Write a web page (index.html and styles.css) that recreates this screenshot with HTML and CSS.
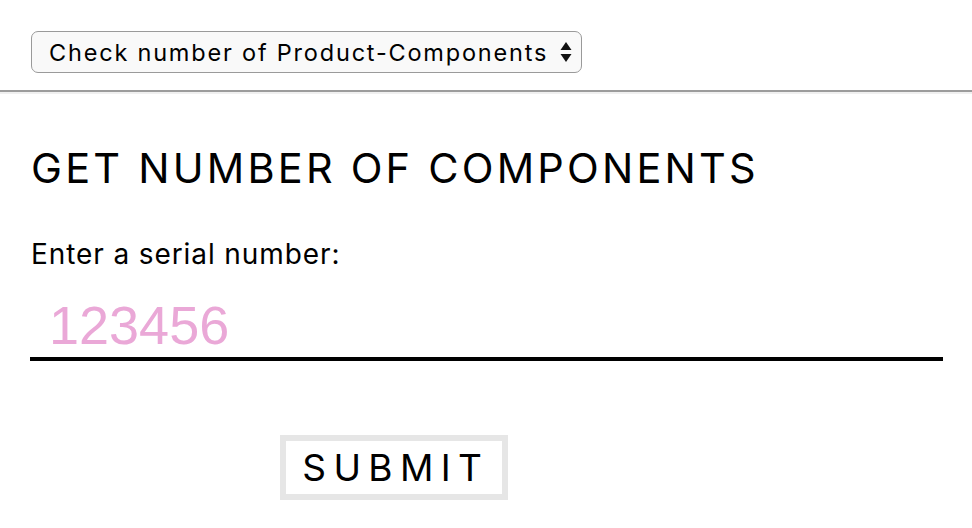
FILE: index.html
```html
<!DOCTYPE html>
<html lang="en">
<head>
<meta charset="utf-8">
<title>Get number of components</title>
<link rel="stylesheet" href="styles.css">
</head>
<body>
<header class="topbar">
  <div class="select-wrap">
    <select class="nav-select">
      <option>Check number of Product-Components</option>
    </select>
    <svg class="select-arrows" width="12" height="22" viewBox="0 0 12 22" aria-hidden="true">
      <path d="M6 1 L11.5 9 L0.5 9 Z" fill="#111"/>
      <path d="M6 21 L11.5 13 L0.5 13 Z" fill="#111"/>
    </svg>
  </div>
</header>
<main class="content">
  <h1 class="title">GET NUMBER OF COMPONENTS</h1>
  <form class="form">
    <label class="label" for="serial">Enter a serial number:</label>
    <input class="serial" id="serial" type="text" placeholder="123456">
    <div class="actions">
      <button class="submit" type="button">SUBMIT</button>
    </div>
  </form>
</main>
</body>
</html>
```
FILE: styles.css
```css
* { box-sizing: border-box; }
html, body { margin: 0; padding: 0; background: #fff; }
body {
  font-family: Inter, "Noto Sans", sans-serif;
  color: #000;
}
.topbar {
  padding: 31px 31px 17px;
  border-bottom: 2px solid #9c9c9c;
  box-shadow: 0 2px 0 #f0f0f0;
}
.select-wrap {
  position: relative;
  display: inline-block;
  vertical-align: top;
  height: 42px;
}
.nav-select {
  display: block;
  appearance: none;
  -webkit-appearance: none;
  width: 551px;
  height: 42px;
  border: 1.5px solid #9a9a9a;
  border-radius: 7px;
  background: #f9f9f9;
  font-family: Inter, "Noto Sans", sans-serif;
  font-size: 23.5px;
  letter-spacing: 1.8px;
  color: #000;
  padding: 0 0 0 17px;
  margin: 0;
}
.select-arrows {
  position: absolute;
  right: 10px;
  top: 10px;
}
.content {
  padding: 0 29px 0 31px;
}
.title {
  margin: 52px 0 0;
  font-size: 41.5px;
  font-weight: 400;
  line-height: 48px;
  letter-spacing: 3.2px;
}
.form {
  display: flex;
  flex-direction: column;
}
.label {
  margin-top: 45px;
  font-size: 28px;
  line-height: 34px;
  letter-spacing: 0.9px;
}
.serial {
  margin-top: 30px;
  border: 0;
  border-bottom: 4px solid #000;
  outline: none;
  padding: 0 0 8px 19px;
  height: 60px;
  font-family: "Liberation Sans", Arial, sans-serif;
  font-size: 54px;
  width: 913px;
  margin-left: -1px;
}
.serial::placeholder { color: #eaa8d7; opacity: 1; }
.actions {
  padding-left: 249px;
  margin-top: 74px;
}
.submit {
  width: 228px;
  height: 65px;
  border: 6px solid #e6e6e6;
  background: #fff;
  font-family: Inter, "Noto Sans", sans-serif;
  font-size: 37px;
  letter-spacing: 0.2em;
  padding: 0 0 0 0.1em;
  color: #000;
  line-height: 1;
}
```
